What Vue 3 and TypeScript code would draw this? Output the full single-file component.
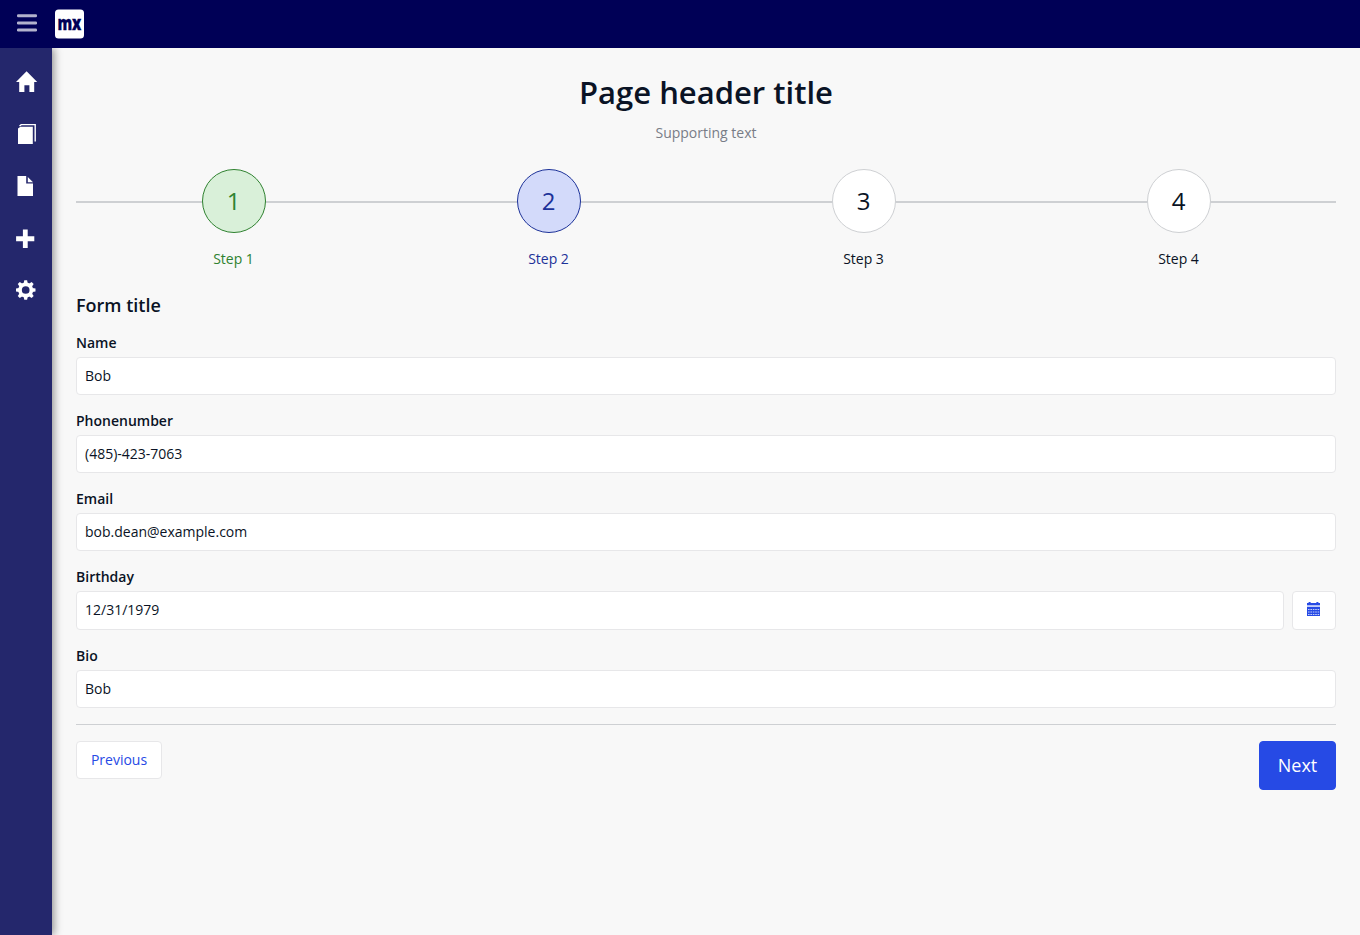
<script setup lang="ts">
import { ref } from 'vue'

interface Step {
  n: number
  state: 'done' | 'active' | 'todo'
}
interface Field {
  id: string
  label: string
  value: string
  date?: boolean
}

const steps: Step[] = [
  { n: 1, state: 'done' },
  { n: 2, state: 'active' },
  { n: 3, state: 'todo' },
  { n: 4, state: 'todo' },
]

const fields = ref<Field[]>([
  { id: 'name', label: 'Name', value: 'Bob' },
  { id: 'phone', label: 'Phonenumber', value: '(485)-423-7063' },
  { id: 'email', label: 'Email', value: 'bob.dean@example.com' },
  { id: 'birthday', label: 'Birthday', value: '12/31/1979', date: true },
  { id: 'bio', label: 'Bio', value: 'Bob' },
])

const teeth = [0, 45, 90, 135, 180, 225, 270, 315]
</script>

<template>
  <div class="app">
    <header class="topbar">
      <svg class="burger" width="20" height="18" viewBox="0 0 20 18">
        <rect x="0" y="0.2" width="20" height="3" rx="1.2" />
        <rect x="0" y="7.4" width="20" height="3" rx="1.2" />
        <rect x="0" y="14.5" width="20" height="3" rx="1.2" />
      </svg>
      <svg class="logo" width="29" height="30" viewBox="0 0 29 30">
        <rect x="0" y="0.4" width="29" height="29.2" rx="3.6" fill="#fff" />
        <text x="2.4" y="20.8" textLength="24" lengthAdjust="spacingAndGlyphs">mx</text>
      </svg>
    </header>
    <div class="body">
      <nav class="sidebar">
        <a class="nav-item">
          <svg width="22" height="22" viewBox="0 0 22 22">
            <path d="M10.6 0.3 21.2 11H18.2V21H13.4V14.2H8.4V21H3.2V11H0Z" />
          </svg>
        </a>
        <a class="nav-item">
          <svg width="22" height="22" viewBox="0 0 22 22">
            <path d="M2 5.4 4.4 3.7H16.8V21H2Z" />
            <path d="M3.5 3 5.2 1.6H19.2V18.6" fill="none" stroke="#fff" stroke-width="1.4" />
          </svg>
        </a>
        <a class="nav-item">
          <svg width="22" height="22" viewBox="0 0 22 22">
            <path d="M1.5 1H10.2V8.6H17V21H1.5ZM11.8 2 17 7.2H11.8Z" />
          </svg>
        </a>
        <a class="nav-item">
          <svg width="22" height="22" viewBox="0 0 22 22">
            <path d="M6.9 2.6H11.7V9.2H18.3V14.2H11.7V20.9H6.9V14.2H0.1V9.2H6.9Z" />
          </svg>
        </a>
        <a class="nav-item">
          <svg width="22" height="22" viewBox="0 0 22 22">
            <circle cx="9.7" cy="11" r="5.7" fill="none" stroke="#fff" stroke-width="3.7" />
            <path
              v-for="a in teeth"
              :key="a"
              d="M8.3 1.2H11.1L11.8 4.4H7.6Z"
              :transform="`rotate(${a} 9.7 11)`"
            />
          </svg>
        </a>
      </nav>
      <main class="content">
        <h1>Page header title</h1>
        <p class="support">Supporting text</p>
        <ol class="wizard">
          <li v-for="s in steps" :key="s.n" class="step" :class="s.state">
            <span class="number">{{ s.n }}</span>
            <span class="caption">Step {{ s.n }}</span>
          </li>
        </ol>
        <h2>Form title</h2>
        <form @submit.prevent>
          <div v-for="f in fields" :key="f.id" class="field">
            <label :for="f.id">{{ f.label }}</label>
            <div class="control" :class="{ date: f.date }">
              <input :id="f.id" v-model="f.value" type="text" />
              <button v-if="f.date" type="button" class="calendar" aria-label="Show calendar">
                <svg width="14" height="15" viewBox="0 0 14 15">
                  <path d="M1.6 0H3.6V1H9.4V0H11.4V1H13V3.4H0V1H1.6Z" fill="#264ae5" />
                  <path d="M0 3.4H13V5H0Z" fill="#c3cdf8" />
                  <path d="M0 5H13V14H0Z" fill="#264ae5" />
                  <path
                    d="M1 7.5H12.2M1 10H12.2M1 12.5H12.2"
                    stroke="#c3cdf8"
                    stroke-width="1"
                    stroke-dasharray="1.6 0.8"
                  />
                </svg>
              </button>
            </div>
          </div>
        </form>
        <footer class="actions">
          <button type="button" class="previous">Previous</button>
          <button type="button" class="next">Next</button>
        </footer>
      </main>
    </div>
  </div>
</template>

<style>
body {
  margin: 0;
  background: #f8f8f8;
}
</style>

<style scoped>
.app,
.app * {
  box-sizing: border-box;
}
.app {
  display: flex;
  flex-direction: column;
  height: 100vh;
  font: 14px/20px 'Open Sans', sans-serif;
  color: #0a1325;
  background: #f8f8f8;
}
.topbar {
  display: flex;
  align-items: center;
  height: 48px;
  flex: none;
  padding-left: 17px;
  gap: 18px;
  background: #000056;
}
.burger {
  fill: #b2b2cd;
  margin-bottom: 2px;
}
.logo {
  overflow: visible;
}
.logo text {
  font: 800 20px 'Open Sans', sans-serif;
  fill: #000056;
  stroke: #000056;
  stroke-width: 0.3px;
}
.body {
  display: flex;
  flex: 1;
  min-height: 0;
}
.sidebar {
  width: 52px;
  flex: none;
  padding-top: 8px;
  background: #24276c;
  box-shadow: 2px 0 8px rgba(0, 0, 0, 0.42);
  clip-path: inset(0 -20px 0 0);
}
.nav-item {
  display: flex;
  align-items: center;
  height: 52px;
  padding-left: 16px;
}
.nav-item svg {
  fill: #fff;
}
.content {
  flex: 1;
  padding: 24px 24px 0;
}
h1 {
  margin: 0;
  font-size: 31px;
  line-height: 40px;
  font-weight: 600;
  text-align: center;
}
.support {
  margin: 11px 0 0;
  text-align: center;
  color: #787d87;
}
.wizard {
  display: grid;
  grid-template-columns: repeat(4, 1fr);
  margin: 26px 0 0;
  padding: 0;
  list-style: none;
  background: linear-gradient(#ced0d3, #ced0d3) 0 32px / 100% 2px no-repeat;
}
.step {
  display: flex;
  flex-direction: column;
  align-items: center;
}
.number {
  display: flex;
  align-items: center;
  justify-content: center;
  width: 64px;
  height: 64px;
  border: 1px solid #ced0d3;
  border-radius: 50%;
  background: #fff;
  font-size: 24px;
}
.caption {
  margin-top: 16px;
}
.done {
  color: #2f8230;
}
.done .number {
  background: #d9f0d9;
  border-color: #2f8230;
}
.active {
  color: #1d3299;
}
.active .number {
  background: #d3dafa;
  border-color: #1d3299;
}
h2 {
  margin: 24px 0 0;
  font-size: 18px;
  line-height: 25px;
  font-weight: 600;
}
form {
  margin-top: 15px;
}
.field {
  margin-bottom: 16px;
}
label {
  display: block;
  margin-bottom: 4px;
  font-weight: 600;
}
.control {
  display: flex;
  gap: 8px;
  height: 38px;
}
.control.date {
  height: 39px;
}
input {
  flex: 1;
  min-width: 0;
  padding: 0 8px;
  border: 1px solid #e7e7e9;
  border-radius: 4px;
  background: #fff;
  font: inherit;
  color: inherit;
  outline: none;
}
.date input {
  padding-bottom: 1px;
}
button {
  border: 1px solid #e7e7e9;
  border-radius: 4px;
  background: #fff;
  font: inherit;
  color: #264ae5;
}
.calendar {
  display: flex;
  align-items: center;
  justify-content: center;
  width: 44px;
  padding: 0 0 2px;
}
.actions {
  display: flex;
  justify-content: space-between;
  align-items: flex-start;
  padding-top: 16px;
  border-top: 1px solid #ced0d3;
}
.previous {
  width: 86px;
  height: 38px;
  padding: 0;
}
.next {
  width: 77px;
  height: 49px;
  padding: 0 0 2px;
  border-color: #264ae5;
  background: #264ae5;
  color: #fff;
  font-size: 18px;
}
</style>
